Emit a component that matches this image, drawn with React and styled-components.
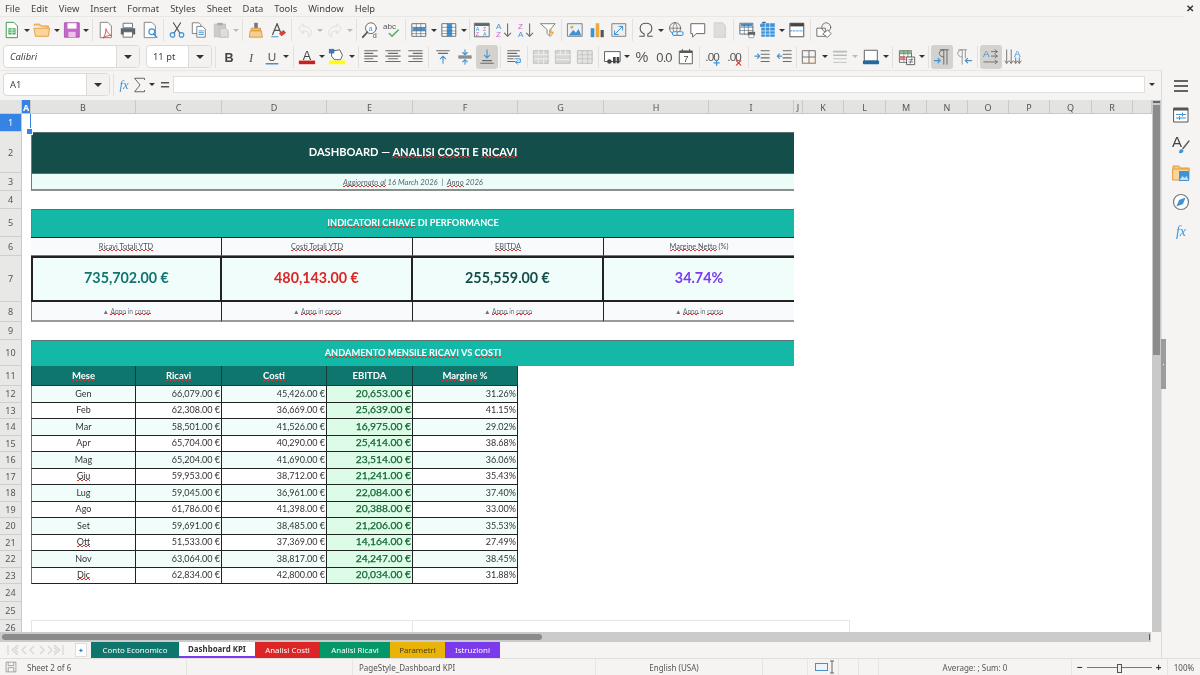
import React from 'react';
import styled, { createGlobalStyle } from 'styled-components';

const Global = createGlobalStyle`
  html, body { margin: 0; padding: 0; background: #f5f4f2; overflow: hidden; }
  * { box-sizing: border-box; }
`;
const uiFont = `"Noto Sans", "Open Sans", sans-serif`;
const cellFont = `Lato, "Liberation Sans", sans-serif`;

const Page = styled.div`
  width: 1200px; height: 675px; display: flex; flex-direction: column;
  background: #f5f4f2; font-family: ${uiFont}; color: #3a3a3a; overflow: hidden; position: relative;
  filter: blur(0.3px);
`;
const MenuBar = styled.div`
  height: 17px; flex: none; display: flex; align-items: center; padding-left: 5px; gap: 11px;
  font-size: 9.4px; color: #444; border-bottom: 1px solid #e8e7e4; margin-right: 16px;
`;
const CloseX = styled.span`
  position: absolute; top: 1px; right: 6px; font-size: 10px; font-weight: 700; color: #333; line-height: 14px;
`;
const Toolbar = styled.div`
  height: ${p => p.$h || 26}px; flex: none; display: flex; align-items: center; padding-left: ${p => p.$pad || 1}px;
`;
const Btn = styled.div`
  width: ${p => p.$w || 22}px; height: 24px; flex: none; display: flex; align-items: center; justify-content: center;
  border-radius: 3px; background: ${p => (p.$on ? '#d4d2cf' : 'transparent')};
  svg { width: 18px; height: 18px; display: block; flex: none; }
`;
const Drop = styled.div`
  width: ${p => p.$w || 8}px; height: 24px; flex: none; display: flex; align-items: center; justify-content: center;
  &::after { content: ''; border-left: 3px solid transparent; border-right: 3px solid transparent;
    border-top: 3px solid ${p => (p.$dim ? '#bbb' : '#333')}; }
`;
const Sep = styled.div`
  width: 1px; height: 22px; flex: none; background: #e2e1de; margin: 0 ${p => p.$r ?? 2}px 0 ${p => p.$l ?? 2}px;
`;
const Combo = styled.div`
  width: ${p => p.$w}px; height: ${p => p.$h || 23}px; flex: none; display: flex; margin-left: ${p => p.$ml || 0}px;
  border: 1px solid #dcdad7; border-radius: 4px; background: #fff; font-size: 10px; color: #444; overflow: hidden;
`;
const ComboText = styled.div`
  flex: 1; padding-left: 6px; display: flex; align-items: center; font-style: ${p => (p.$i ? 'italic' : 'normal')};
  font-family: ${uiFont}; font-size: 9.4px;
`;
const ComboArrow = styled.div`
  width: 23px; flex: none; background: #f3f2f0; border-left: 1px solid #dcdad7; display: flex; align-items: center; justify-content: center;
  &::after { content: ''; border-left: 4px solid transparent; border-right: 4px solid transparent; border-top: 4px solid #333; }
`;

const Body = styled.div`flex: 1; display: flex; min-height: 0;`;
const Work = styled.div`width: 1162px; flex: none; display: flex; flex-direction: column; border-right: 1px solid #dddcd9;`;
const FormulaBar = styled.div`
  height: 30px; flex: none; display: flex; align-items: center; padding: 0 0 2px 3px; border-top: 1px solid #e8e7e4;
`;
const FormulaInput = styled.div`
  width: 972px; height: 17px; flex: none; background: #fff; border: 1px solid #e0dfdc; margin-left: 2px;
`;
const SheetRow = styled.div`flex: 1; display: flex; min-height: 0;`;
const Sheet = styled.div`
  width: 1152px; flex: none; display: grid; overflow: hidden; background: #fff; align-content: start;
  grid-template-columns: 22px 9px 105px 86px 105px 86px 105px 86px 105px 85px 9px 41px 42px 41px 41px 41px 41px 42px 41px 19px;
  grid-template-rows: 14px 18px 41px 18px 18px 28px 19px 46px 20px 18px 26px 20px repeat(12, 16.5px) 18px 18px 15px;
`;
const ColHead = styled.div`
  grid-row: 1; background: ${p => (p.$on ? '#3584e4' : '#e3e3e1')}; color: ${p => (p.$on ? '#fff' : '#555')};
  border-right: 1px solid #c9c9c7; border-bottom: 1px solid #c9c9c7; padding-top: 1px;
  font-size: 9px; display: flex; align-items: center; justify-content: center; font-weight: ${p => (p.$on ? 700 : 400)};
`;
const RowHead = styled.div`
  grid-column: 1; background: ${p => (p.$on ? '#3584e4' : '#e8e8e6')}; color: ${p => (p.$on ? '#fff' : '#555')};
  border-right: 1px solid #c9c9c7; border-bottom: 1px solid #cfcfcd; line-height: 1;
  font-size: 9px; display: flex; align-items: center; justify-content: center;
`;
const Corner = styled.div`grid-row: 1; grid-column: 1; background: #e3e3e1; border-right: 1px solid #c9c9c7; border-bottom: 1px solid #c9c9c7;`;

const Txt = styled.span`white-space: pre;`;
const Merged = styled.div`
  grid-row: ${p => p.$r}; grid-column: 3 / 11; background: ${p => p.$bg}; color: ${p => p.$c || '#fff'};
  font-family: ${cellFont}; font-size: ${p => p.$fs}px; font-weight: ${p => p.$fw || 700}; font-style: ${p => p.$i ? 'italic' : 'normal'};
  display: flex; align-items: center; justify-content: center; padding-bottom: ${p => p.$pb || 0}px;
  border-top: 1px solid #59706e; border-left: 1px solid #6b7f7d; border-bottom: ${p => p.$bb || 'none'};
`;
const KpiLabel = styled.div`
  grid-row: 7; grid-column: ${p => p.$col}; background: #f8fafc; color: #4b5563; font-family: ${cellFont}; font-size: 7.4px;
  display: flex; align-items: center; justify-content: center;
  border-right: ${p => (p.$last ? 'none' : '1px solid #222')}; border-top: 1px solid #222; border-bottom: 1px solid #777;
`;
const KpiValue = styled.div`
  grid-row: 8; grid-column: ${p => p.$col}; background: #f0fdfa; color: ${p => p.$c}; font-family: ${cellFont};
  font-size: 14.3px; font-weight: 700; display: flex; align-items: center; justify-content: center; padding-bottom: 3px;
  border-top: 2px solid #222; border-bottom: 2px solid #222; border-right: ${p => (p.$last ? 'none' : '2px solid #222')};
  border-left: ${p => (p.$first ? '2px solid #222' : 'none')};
`;
const KpiNote = styled.div`
  grid-row: 9; grid-column: ${p => p.$col}; background: #f8fafc; color: #6b7280; font-family: ${cellFont}; font-size: 6.6px;
  display: flex; align-items: center; justify-content: center;
  border-right: ${p => (p.$last ? 'none' : '1px solid #222')}; border-bottom: 2px solid #9a9a9a; border-left: ${p => (p.$first ? '1px solid #777' : 'none')};
`;
const TH = styled.div`
  grid-row: 12; grid-column: ${p => p.$col}; background: #0f766e; color: #fff; font-family: ${cellFont};
  font-size: 9.5px; font-weight: 700; display: flex; align-items: center; justify-content: center;
  border-right: 1px solid #123f3c; border-bottom: 1px solid #123f3c;
  border-left: ${p => (p.$first ? '1px solid #123f3c' : 'none')};
`;
const TD = styled.div`
  grid-row: ${p => p.$r}; grid-column: ${p => p.$col}; background: ${p => p.$bg}; color: ${p => p.$c || '#333'};
  font-family: ${cellFont}; font-size: ${p => p.$fs || 9}px; font-weight: 400; -webkit-text-stroke: ${p => p.$heavy ? '0.25px' : '0'};
  display: flex; align-items: center; justify-content: ${p => (p.$center ? 'center' : 'flex-end')};
  padding: 0 ${p => (p.$center ? 0 : 1)}px ${p => (p.$heavy ? 2 : 1)}px 0;
  border-right: 1px solid #222; border-bottom: 1px solid #222;
  border-left: ${p => (p.$first ? '1px solid #777' : 'none')};
`;
const Spell = styled.span`
  background:
    linear-gradient(90deg, #d8352f 50%, transparent 50%) 0 100% / 4px 1px repeat-x,
    linear-gradient(90deg, #d8352f 50%, transparent 50%) 2px calc(100% - 1px) / 4px 1px repeat-x;
`;
const Stub = styled.div`
  grid-row: 27; grid-column: 3 / ${p => p.$end}; margin-right: ${p => p.$extra || 0}px;
  border-top: 1px solid #e6e6e6; border-left: 1px solid #e6e6e6; border-right: 1px solid #e6e6e6;
`;
const CursorBox = styled.div`
  grid-row: 2; grid-column: 2; border-right: 1px solid #3584e4; position: relative;
  &::after { content: ''; position: absolute; right: -3px; bottom: -3px; width: 5px; height: 5px; background: #3584e4; border: 1px solid #fff; }
`;
const VScroll = styled.div`
  width: 9px; flex: none; background: #c9c9c9; padding: 1px 1px 0 1px; display: flex; flex-direction: column; gap: 2px;
  &::before { content: ''; height: 2px; background: #666; flex: none; }
`;
const VThumb = styled.div`width: 7px; height: 250px; background: #8b8b8b; flex: none;`;
const HScroll = styled.div`height: 10px; flex: none; background: #cbcbcb; margin-right: 10px; display: flex; align-items: center; padding-left: 2px; justify-content: space-between;`;
const HThumb = styled.div`width: 540px; height: 6px; background: #8b8b8b; border-radius: 3px;`;
const HTick = styled.div`width: 1px; height: 6px; background: #555; margin-right: 1px;`;
const TabBar = styled.div`height: 16px; flex: none; display: flex; padding-left: 91px; position: relative;`;
const TabNav = styled.div`
  position: absolute; left: 6px; top: 1px; width: 60px; height: 14px; display: flex; align-items: center;
  svg { width: 60px; height: 14px; }
`;
const AddTab = styled.div`
  position: absolute; left: 75px; top: 1px; width: 12px; height: 14px; background: #fff; border: 1px solid #ddd;
  display: flex; align-items: center; justify-content: center; color: #3d7cc9; font-size: 7px; line-height: 1;
`;
const Tab = styled.div`
  width: ${p => p.$w}px; flex: none; background: ${p => p.$bg}; color: ${p => p.$c || '#fff'}; font-size: 7.9px; font-weight: ${p => (p.$on ? 700 : 400)};
  display: flex; align-items: center; justify-content: center; white-space: pre;
  border-bottom: ${p => (p.$on ? '2px solid #7c3aed' : 'none')};
`;
const StatusBar = styled.div`
  height: 17px; flex: none; display: flex; align-items: center; font-size: 8px; color: #555; border-top: 1px solid #e0dfdc;
`;
const StatusCell = styled.div`
  width: ${p => p.$w}px; flex: none; height: 100%; display: flex; align-items: center; gap: ${p => p.$gap || 0}px;
  justify-content: ${p => p.$j || 'flex-start'}; padding-left: ${p => p.$pl || 0}px; white-space: pre;
  border-right: ${p => (p.$last ? 'none' : '1px solid #e6e5e2')};
`;
const SideBar = styled.div`
  flex: 1; display: flex; flex-direction: column; align-items: center; padding-top: 1px; position: relative;
`;
const SideBtn = styled.div`
  height: 29px; width: 22px; display: flex; align-items: center; justify-content: center;
  svg { width: 20px; height: 20px; }
`;
const Grip = styled.div`
  position: absolute; left: -1px; top: 269px; width: 5px; height: 50px; background: #9c9c9c;
  display: flex; align-items: center; justify-content: center; color: #fff; font-size: 7px; font-weight: 700;
`;
const ZoomTrack = styled.div`width: 65px; height: 1px; background: #777; position: relative; flex: none;
  &::after { content: ''; position: absolute; left: 30px; top: -3px; width: 3px; height: 7px; border: 1px solid #555; background: #eee; }
`;
const ZoomSign = styled.span`color: #333; font-weight: 700; font-size: 10px;`;

/* ---- Icons ---- */
const S = ({ children }) => <svg viewBox="0 0 20 20" fill="none" strokeLinecap="round" strokeLinejoin="round">{children}</svg>;
const Doc = ({ c = '#777', f = '#fff' }) => <path d="M4 1.5h8l4 4v13H4z" fill={f} stroke={c} strokeWidth="1.1" />;
const blue = '#3d93d8', gray = '#6b6b6b', red = '#d8413a', pink = '#c566c9';
const T = ({ x, y, s, c = '#555', a, w, st, f = 'Liberation Sans', ls, children }) => (
  <text x={x} y={y} fontSize={s} fill={c} textAnchor={a} fontWeight={w} fontStyle={st} fontFamily={f} letterSpacing={ls}>{children}</text>
);
const I = {
  newDoc: <S><Doc c="#3f9a52" /><rect x="6" y="8" width="8" height="7" fill="#4caf5e" /><path d="M7 10h6M7 12.5h6M10 8v7" stroke="#fff" strokeWidth=".8" /></S>,
  open: <S><path d="M1.5 5V3.5h6l1.5 2h8V8" fill="#f8c77f" stroke="#e49a3a" /><path d="M1.5 8h17L17 17H3z" fill="#fad49a" stroke="#e49a3a" /></S>,
  save: <S><path d="M2 2h16v16H2z" fill="#c566c9" stroke="#a64aa9" /><rect x="5" y="2.5" width="10" height="6" fill="#fff" /><rect x="6" y="12" width="8" height="6" fill="#eac4ec" /></S>,
  pdf: <S><Doc c="#888" /><path d="M10 9c2 5 4 6 6 7-3 0-7 1-9 3 2-3 3-7 3-10z" stroke={red} strokeWidth="1" /></S>,
  print: <S><rect x="5" y="2.5" width="10" height="5" fill="#fff" stroke="#666" /><path d="M2 8h16v7H2z" fill="#5c6670" /><rect x="5" y="12" width="10" height="6" fill="#fff" stroke="#666" /></S>,
  preview: <S><Doc c="#888" /><circle cx="12" cy="12" r="3.2" stroke={blue} strokeWidth="1.3" fill="#fff" /><path d="M14 14.5l3.5 3.5" stroke={blue} strokeWidth="1.6" /></S>,
  cut: <S><path d="M6 2l7 11M14 2L7 13" stroke="#555" strokeWidth="1.3" /><circle cx="5" cy="15.5" r="2.5" stroke={blue} strokeWidth="1.3" /><circle cx="15" cy="15.5" r="2.5" stroke={blue} strokeWidth="1.3" /></S>,
  copy: <S><path d="M3 2h7l2 2v10H3z" fill="#fff" stroke="#777" /><path d="M8 6h6l3 3v9H8z" fill="#fff" stroke="#777" /><path d="M10 11h5M10 13h5M10 15h5" stroke={blue} /></S>,
  paste: <S><path d="M3 3.5h12v14H3z" fill="#ccc" stroke="#bbb" /><rect x="6" y="2" width="6" height="3" fill="#aaa" /><path d="M9 8h6l3 3v7H9z" fill="#ddd" stroke="#bbb" /></S>,
  clone: <S><path d="M8 2h4v6H8z" fill="#777" /><path d="M5 8h10v3H5z" fill="#f0c070" stroke="#d8973b" /><path d="M4 11h12l1 7H3z" fill="#f6cf8f" stroke="#d8973b" /></S>,
  clear: <S><path d="M9 3L4 15M9 3l4 10M5.8 10.5h6" stroke="#555" strokeWidth="1.4" /><path d="M3 17.5h7" stroke={blue} strokeWidth="1.3" /><path d="M11 14l5-4 3 3-5 4z" fill={red} /></S>,
  undo: <S><path d="M3 8l5-5v3c6 0 9 3 9 7 0 2-1 3-3 5 1-5-1-7-6-7v3z" stroke="#ddd" strokeWidth="1.1" /></S>,
  redo: <S><path d="M17 8l-5-5v3c-6 0-9 3-9 7 0 2 1 3 3 5-1-5 1-7 6-7v3z" stroke="#ddd" strokeWidth="1.1" /></S>,
  find: <S><circle cx="11" cy="8" r="6" stroke="#666" strokeWidth="1.1" fill="#fff" /><path d="M7 12.5L2 18" stroke="#555" strokeWidth="2" /><T x="8.4" y="10.6" s="8" c={blue}>a</T><T x="13" y="18.5" s="8">d</T></S>,
  spell: <S><T x="0" y="9" s="9">abc</T><path d="M7 14l3 3 7-7" stroke="#4caf5e" strokeWidth="1.6" /></S>,
  rows: <S><rect x="2.5" y="3" width="15" height="14" fill="#fff" stroke="#5b6670" /><rect x="3" y="7" width="14" height="4" fill={blue} /><path d="M2.5 7h15M2.5 11h15M2.5 14h15M7 3v14M12 3v14" stroke="#5b6670" strokeWidth=".7" /></S>,
  cols: <S><rect x="2.5" y="3" width="15" height="14" fill="#fff" stroke="#5b6670" /><rect x="8" y="3" width="5" height="14" fill={blue} /><path d="M2.5 7h15M2.5 11h15M2.5 14h15M8 3v14M13 3v14" stroke="#5b6670" strokeWidth=".7" /></S>,
  sort: <S><rect x="2" y="2.5" width="16" height="15" fill="#f7f7f7" stroke="#5b6670" /><rect x="2" y="2.5" width="16" height="3" fill="#5b6670" /><T x="3" y="11" s="6" c={blue}>A</T><T x="3" y="17" s="6" c={pink}>Z</T><T x="11" y="11" s="6" c={pink}>Z</T><T x="11" y="17" s="6" c={blue}>A</T></S>,
  asc: <S><T x="1" y="9" s="9" c={blue}>A</T><T x="1" y="18" s="9" c={pink}>Z</T><path d="M14 3v14M10.5 13.5L14 17l3.5-3.500" stroke={gray} strokeWidth="1.2" /></S>,
  desc: <S><T x="1" y="9" s="9" c={pink}>Z</T><T x="1" y="18" s="9" c={blue}>A</T><path d="M14 3v14M10.5 13.5L14 17l3.5-3.500" stroke={gray} strokeWidth="1.2" /></S>,
  filter: <S><path d="M2 3h16l-6 7v7l-3-3v-4z" fill="#fff" stroke="#777" /><path d="M14 8l-3 5h3l-1 5 4-6h-3z" fill="#f1a93c" /></S>,
  image: <S><rect x="2" y="3" width="16" height="14" fill="#e8f2fb" stroke="#777" /><circle cx="6.5" cy="7" r="1.6" fill="#f1a93c" /><path d="M3 16l5-6 3 3 3-4 3 7z" fill={blue} /></S>,
  chart: <S><rect x="3" y="8" width="4" height="10" fill={blue} /><rect x="8.5" y="2.5" width="4" height="15.5" fill="#f1a93c" /><rect x="14" y="10" width="3.5" height="8" fill="#555" /></S>,
  pivot: <S><rect x="2.5" y="3" width="15" height="14" fill="#eee" stroke="#777" /><path d="M5 15l9-9M14 10V6h-4M5 11v4h4" stroke={blue} strokeWidth="1.1" /></S>,
  omega: <S><path d="M3 17h5v-2.5C5 13 3.5 10.5 3.5 8 3.5 4.5 6.5 2.500 10 2.500s6.500 2 6.500 5.500c0 2.500-1.500 5-4.500 6.500V17h5" stroke="#555" strokeWidth="1.2" /></S>,
  link: <S><circle cx="9" cy="8" r="6.200" stroke="#666" /><path d="M3 8h12M9 2c-3 3-3 9 0 12M9 2c3 3 3 9 0 12" stroke="#666" strokeWidth=".8" /><rect x="6" y="12" width="7" height="4" rx="2" fill="#fff" stroke={blue} strokeWidth="1.2" /><rect x="11" y="12" width="7" height="4" rx="2" fill="#fff" stroke={blue} strokeWidth="1.2" /></S>,
  comment: <S><path d="M2.500 3h15v11H8l-4 4v-4H2.500z" fill="#fff" stroke="#666" strokeWidth="1.100" /></S>,
  note: <S><path d="M4 2h9l3 3v13H4z" fill="#ddd" stroke="#ccc" /></S>,
  printArea: <S><rect x="2.500" y="2.500" width="14" height="12" fill="#fff" stroke="#5b6670" /><rect x="3" y="3" width="13" height="3" fill={blue} /><path d="M2.500 7h14M2.500 10.500h14M7 3v12M11.500 3v12" stroke="#5b6670" strokeWidth=".7" /><rect x="11" y="12" width="8" height="4" fill="#5c6670" /><rect x="12.500" y="15" width="5" height="3.500" fill="#fff" stroke="#666" strokeWidth=".6" /></S>,
  freeze: <S><rect x="2.500" y="2.500" width="15" height="15" fill={blue} /><path d="M2.500 7h15M2.500 11h15M2.500 14.500h15M7 2.500v15M12 2.500v15" stroke="#fff" strokeWidth=".7" /><path d="M4 1.500h3M2 4v2" stroke="#2f6fa8" strokeWidth="1.200" /></S>,
  split: <S><rect x="2.500" y="2.500" width="15" height="15" fill="#fff" stroke="#444" /><rect x="2.500" y="2.500" width="15" height="3.500" fill="#444" /><path d="M2.500 11h15" stroke={blue} strokeDasharray="2 1.500" /></S>,
  shapes: <S><rect x="2.500" y="8" width="9" height="9" fill="#fff" stroke="#666" /><circle cx="12.500" cy="7" r="5" stroke="#666" /><path d="M9 14l5-4 4 4-4 4z" fill="#fff" stroke="#666" /></S>,
  bold: <S><T x="10" y="15.500" a="middle" s="14" w="700" c="#444">B</T></S>,
  italic: <S><T x="10" y="15.500" a="middle" s="14" st="italic" f="Liberation Serif">I</T></S>,
  under: <S><T x="10" y="14" a="middle" s="13">U</T><path d="M3.500 17.500h13" stroke={blue} strokeWidth="1.400" /></S>,
  fontColor: <S><T x="10" y="13" a="middle" s="14" c="#444">A</T><rect x="1" y="14" width="18" height="4" fill="#c9211e" /></S>,
  hilite: <S><path d="M7 3l6-1 3 6-2 5H7L4 9V6z" fill="#fff" stroke="#555" /><rect x="1" y="1" width="6" height="5" fill="#2a6db5" opacity=".9" /><rect x="1" y="14" width="18" height="4" fill="#ffff00" /></S>,
  left: <S><path d="M3 3h14M3 6h9M3 9h14M3 12h9M3 15h14" stroke={gray} strokeWidth="1.200" /></S>,
  center: <S><path d="M2 3h16M5 6h10M2 9h16M5 12h10M2 15h16" stroke={gray} strokeWidth="1.200" /></S>,
  right: <S><path d="M3 3h15M8 6h10M3 9h15M8 12h10M3 15h15" stroke={gray} strokeWidth="1.200" /></S>,
  top: <S><path d="M3 3h14M5 6h10" stroke={gray} strokeWidth="1.200" /><path d="M10 17V9M7 12l3-3 3 3" stroke={blue} strokeWidth="1.200" /></S>,
  middle: <S><path d="M3 9h14M3 11h14" stroke={gray} strokeWidth="1.200" /><path d="M10 2v5M7.500 5L10 7.500 12.500 5M10 18v-5M7.500 15.500L10 13l2.500 2.500" stroke={blue} strokeWidth="1.200" /></S>,
  bottom: <S><path d="M10 2v9M7 8l3 3 3-3" stroke={blue} strokeWidth="1.200" /><path d="M5 14h10M3 17h14" stroke={gray} strokeWidth="1.200" /></S>,
  wrap: <S><path d="M3 3h13M3 6h10M3 9h13M3 12h6M3 15h8" stroke={gray} strokeWidth="1.200" /><path d="M11 12h6v4h-5M14 14l-2 2 2 2" stroke={blue} strokeWidth="1.100" /></S>,
  merge: <S><rect x="2" y="3" width="16" height="14" fill="#d7d7d5" stroke="#bbb" /><path d="M2 7.500h16M2 12h16M7 3v4.500M13 3v4.500M7 12v5M13 12v5" stroke="#f2f2f2" strokeWidth="1" /></S>,
  merge2: <S><rect x="2" y="3" width="16" height="14" fill="#d7d7d5" stroke="#bbb" /><path d="M2 7.500h16M2 13h16M7 3v4.500M13 3v4.500" stroke="#f2f2f2" strokeWidth="1" /></S>,
  merge3: <S><rect x="2" y="3" width="16" height="14" fill="#e4e4e2" stroke="#bbb" /><path d="M2 7.500h16M2 12h16M7 3v14M13 3v14" stroke="#bbb" strokeWidth=".8" /></S>,
  currency: <S><rect x="1" y="4" width="17" height="11" fill="#fff" stroke="#555" /><circle cx="6" cy="15" r="2.500" fill="#444" /><rect x="10" y="10" width="3" height="7" fill="#444" /><rect x="14" y="10" width="3" height="7" fill="#444" /></S>,
  percent: <S><T x="10" y="16" a="middle" s="16">%</T></S>,
  number: <S><T x="10" y="15.500" a="middle" s="14.500" ls="-1">0.0</T></S>,
  date: <S><rect x="3" y="3.500" width="14" height="14" fill="#fff" stroke="#555" /><rect x="3" y="3" width="14" height="2.500" fill="#555" /><path d="M6 1.500v3M14 1.500v3" stroke="#555" /><T x="10" y="15.500" a="middle" s="10" c="#444">7</T></S>,
  addDec: <S><T x="9" y="14" a="middle" s="13" ls="-1">.00</T><path d="M14 13.500v6M11 16.500h6" stroke={blue} strokeWidth="1.300" /></S>,
  delDec: <S><T x="9" y="14" a="middle" s="13" ls="-1">.00</T><path d="M11.500 14l5 5M16.500 14l-5 5" stroke={red} strokeWidth="1.300" /></S>,
  indent: <S><path d="M9 3h9M9 7h9M9 11h9M9 15h9" stroke={gray} strokeWidth="1.200" /><path d="M2 9h5M5 6.500L7.500 9 5 11.500" stroke={blue} strokeWidth="1.200" /></S>,
  outdent: <S><path d="M9 3h9M9 7h9M9 11h9M9 15h9" stroke={gray} strokeWidth="1.200" /><path d="M7.500 9h-5M5 6.500L2.500 9 5 11.500" stroke={blue} strokeWidth="1.200" /></S>,
  borders: <S><rect x="3" y="3" width="14" height="14" stroke="#666" strokeWidth="1" /><path d="M10 3v14M3 10h14" stroke="#666" /><path d="M3 17h14M17 10v7" stroke="#e49a3a" /></S>,
  bstyle: <S><path d="M3 4h14" stroke="#bbb" strokeWidth="2" /><path d="M3 8h14" stroke="#bbb" strokeWidth="1.500" /><path d="M3 12h14" stroke="#bbb" strokeWidth="1" /><path d="M3 16h14" stroke="#bbb" strokeDasharray="2 1" /></S>,
  bcolor: <S><rect x="3" y="2.500" width="14" height="12" fill="#fff" stroke="#555" /><rect x="1" y="14" width="18" height="4" rx="1" fill="#1f6aa5" /></S>,
  cond: <S><rect x="2" y="3" width="13" height="13" fill="#fff" stroke="#666" /><rect x="2" y="3" width="13" height="3.500" fill="#7fc08c" /><rect x="2" y="9" width="6" height="4" fill="#e88" /><path d="M2 6.500h13M2 10h13M2 13h13M6.500 3v13M11 3v13" stroke="#666" strokeWidth=".6" /><rect x="10" y="10" width="8.500" height="8.500" fill="#fff" stroke="#555" /><path d="M12 13h4.500M12 15.500h4.500M15.500 11.500l-2 5.500" stroke="#555" strokeWidth=".8" /></S>,
  ltr: <S><path d="M8 2h9M12 2v16M15.500 2v16M12 2C9 2 7 4 7 6s2 4 5 4" stroke={gray} strokeWidth="1.100" /><path d="M1.500 14h6M5.500 11.500L8 14l-2.500 2.500" stroke={blue} strokeWidth="1.300" /></S>,
  rtl: <S><path d="M4 2h9M8 2v16M11.500 2v9M8 2C5 2 3 4 3 6s2 4 5 4" stroke="#999" strokeWidth="1.100" /><path d="M18.500 14h-7M14 11.500L11.500 14l2.500 2.500" stroke={blue} strokeWidth="1.300" /></S>,
  horiz: <S><T x="1" y="10" s="11" c={blue}>A</T><path d="M10.500 4H17M14.500 2L17 4l-2.500 2M10.500 9H17M14.500 7L17 9l-2.500 2M2 15.500h15M14.500 13.500L17 15.500l-2.500 2" stroke={gray} strokeWidth="1" /></S>,
  vert: <S><T x="11" y="10" s="11" c={blue}>A</T><path d="M3 2v15M1 14.500L3 17l2-2.500M8 2v15M6 14.500L8 17l2-2.500M13 11v6M11 14.500l2 2.500 2-2.500M17 11v6M15 14.500l2 2.500 2-2.500" stroke={gray} strokeWidth="1" /></S>,
  fx: <S><T x="10" y="14.500" a="middle" s="14" st="italic" c={blue} f="Liberation Serif">fx</T></S>,
  sum: <S><path d="M15 4V2.500H4L10 10l-6 7.500h11V16" stroke="#666" strokeWidth="1.100" /></S>,
  eq: <S><path d="M5.500 7.500h9M5.500 12h9" stroke="#555" strokeWidth="1.600" strokeLinecap="butt" /></S>,
  burger: <S><path d="M3 5h14M3 10h14M3 15h14" stroke="#333" strokeWidth="1.700" strokeLinecap="butt" /></S>,
  props: <S><rect x="3" y="3" width="14" height="14" fill="#fff" stroke="#555" /><rect x="3" y="3" width="14" height="2.500" fill="#555" /><path d="M5.500 9.500h9M5.500 13h9" stroke={blue} strokeWidth="1" /><path d="M11.500 8v3M8.500 11.500v3" stroke={blue} strokeWidth="1" /></S>,
  styles: <S><T x="1" y="13" s="15" c="#444">A</T><path d="M8 19c0-3 1.500-4 3-4l1.500 1.500c0 2-2 3-4.500 2.500z" fill={blue} /><path d="M12 14.500L18 7" stroke="#555" strokeWidth="1.300" /></S>,
  gallery: <S><path d="M2 5V3h6l1.500 2H18v3H2z" fill="#f8c77f" stroke="#e49a3a" /><path d="M2 6h16v11H2z" fill="#fad49a" stroke="#e49a3a" /><rect x="8" y="8" width="10" height="10" fill={blue} /><path d="M8.500 17l3-4 2 2 2-2 2 4z" fill="#fff" opacity=".7" /></S>,
  nav: <S><circle cx="10" cy="10" r="7.500" stroke="#777" strokeWidth="1.200" fill="#fff" /><path d="M14.500 5.500L12 12l-6.500 2.500L8 8z" fill={blue} /></S>,
};

const Toolbar1 = () => (
  <Toolbar $h={26}>
    <Btn>{I.newDoc}</Btn><Drop /><Btn>{I.open}</Btn><Drop /><Btn $w={21}>{I.save}</Btn><Drop /><Sep />
    <Btn>{I.pdf}</Btn><Btn>{I.print}</Btn><Btn>{I.preview}</Btn><Sep />
    <Btn>{I.cut}</Btn><Btn>{I.copy}</Btn><Btn>{I.paste}</Btn><Drop $dim /><Sep />
    <Btn>{I.clone}</Btn><Btn>{I.clear}</Btn><Sep />
    <Btn>{I.undo}</Btn><Drop $dim /><Btn>{I.redo}</Btn><Drop $dim /><Sep />
    <Btn>{I.find}</Btn><Btn>{I.spell}</Btn><Sep />
    <Btn>{I.rows}</Btn><Drop /><Btn>{I.cols}</Btn><Drop /><Sep $l={1} $r={1} />
    <Btn>{I.sort}</Btn><Btn>{I.asc}</Btn><Btn>{I.desc}</Btn><Btn>{I.filter}</Btn><Sep />
    <Btn>{I.image}</Btn><Btn>{I.chart}</Btn><Btn>{I.pivot}</Btn><Sep />
    <Btn>{I.omega}</Btn><Drop /><Btn>{I.link}</Btn><Btn>{I.comment}</Btn><Btn>{I.note}</Btn><Sep />
    <Btn>{I.printArea}</Btn><Btn $w={20}>{I.freeze}</Btn><Drop /><Btn>{I.split}</Btn><Sep />
    <Btn>{I.shapes}</Btn>
  </Toolbar>
);
const Toolbar2 = () => (
  <Toolbar $h={27} $pad={3}>
    <Combo $w={137}><ComboText $i>Calibri</ComboText><ComboArrow /></Combo>
    <Combo $w={66} $ml={6}><ComboText>11 pt</ComboText><ComboArrow /></Combo>
    <Sep $l={3} $r={2} />
    <Btn>{I.bold}</Btn><Btn>{I.italic}</Btn><Btn $w={20}>{I.under}</Btn><Drop /><Sep $l={3} $r={2} />
    <Btn>{I.fontColor}</Btn><Drop /><Btn>{I.hilite}</Btn><Drop /><Sep $l={2} $r={1} />
    <Btn>{I.left}</Btn><Btn>{I.center}</Btn><Btn>{I.right}</Btn><Sep $r={3} />
    <Btn>{I.top}</Btn><Btn>{I.middle}</Btn><Btn $on>{I.bottom}</Btn><Sep />
    <Btn>{I.wrap}</Btn><Sep />
    <Btn>{I.merge}</Btn><Btn>{I.merge2}</Btn><Btn>{I.merge3}</Btn><Sep $r={3} />
    <Btn $w={21}>{I.currency}</Btn><Drop /><Btn>{I.percent}</Btn><Btn>{I.number}</Btn><Btn>{I.date}</Btn><Sep />
    <Btn>{I.addDec}</Btn><Btn>{I.delDec}</Btn><Sep />
    <Btn>{I.indent}</Btn><Btn>{I.outdent}</Btn><Sep $l={1} $r={1} />
    <Btn>{I.borders}</Btn><Drop $w={10} /><Btn $w={20}>{I.bstyle}</Btn><Drop $w={10} $dim /><Btn>{I.bcolor}</Btn><Drop /><Sep $r={3} />
    <Btn>{I.cond}</Btn><Drop /><Sep />
    <Btn $on>{I.ltr}</Btn><Btn>{I.rtl}</Btn><Sep />
    <Btn $on>{I.horiz}</Btn><Btn>{I.vert}</Btn>
  </Toolbar>
);

const columns = ['A','B','C','D','E','F','G','H','I','J','K','L','M','N','O','P','Q','R',''];
const rowHeads = Array.from({ length: 26 }, (_, i) => i + 1);
const months = [
  ['Gen','66,079.00','45,426.00','20,653.00','31.26'],['Feb','62,308.00','36,669.00','25,639.00','41.15'],
  ['Mar','58,501.00','41,526.00','16,975.00','29.02'],['Apr','65,704.00','40,290.00','25,414.00','38.68'],
  ['Mag','65,204.00','41,690.00','23,514.00','36.06'],['Giu','59,953.00','38,712.00','21,241.00','35.43'],
  ['Lug','59,045.00','36,961.00','22,084.00','37.40'],['Ago','61,786.00','41,398.00','20,388.00','33.00'],
  ['Set','59,691.00','38,485.00','21,206.00','35.53'],['Ott','51,533.00','37,369.00','14,164.00','27.49'],
  ['Nov','63,064.00','38,817.00','24,247.00','38.45'],['Dic','62,834.00','42,800.00','20,034.00','31.88'],
];
const misspelt = ['Giu','Ott','Dic'];
const kpis = [
  ['3 / 5', <Spell>Ricavi Totali YTD</Spell>, '735,702.00 €', '#0f766e'],
  ['5 / 7', <Spell>Costi Totali YTD</Spell>, '480,143.00 €', '#dc2626'],
  ['7 / 9', <Spell>EBITDA</Spell>, '255,559.00 €', '#134e4a'],
  ['9 / 11', <Txt><Spell>Margine Netto</Spell> (%)</Txt>, '34.74%', '#7c3aed'],
];
const Note = () => <Txt>▲ <Spell>Anno</Spell> in <Spell>corso</Spell></Txt>;

export default function App() {
  return (
    <Page>
      <Global />
      <MenuBar>
        {['File','Edit','View','Insert','Format','Styles','Sheet','Data','Tools','Window','Help'].map(m => <span key={m}>{m}</span>)}
      </MenuBar>
      <CloseX>✕</CloseX>
      <Toolbar1 />
      <Toolbar2 />
      <Body>
        <Work>
          <FormulaBar>
            <Combo $w={107}><ComboText>A1</ComboText><ComboArrow /></Combo>
            <Sep $l={3} $r={0} />
            <Btn $w={20}>{I.fx}</Btn><Btn $w={11}>{I.sum}</Btn><Drop $w={14} /><Btn $w={12}>{I.eq}</Btn>
            <FormulaInput />
            <Drop $w={14} />
          </FormulaBar>
          <SheetRow>
            <Sheet>
              <Corner />
              {columns.map((c, i) => <ColHead key={i} $on={c === 'A'} style={{ gridColumn: i + 2 }}>{c}</ColHead>)}
              {rowHeads.map((r, i) => <RowHead key={r} $on={r === 1} style={{ gridRow: i + 2 }}>{r}</RowHead>)}
              <CursorBox />
              <Merged $r={3} $bg="#134e4a" $fs={11.1} $pb={4}><Txt>DASHBOARD — <Spell>ANALISI</Spell> <Spell>COSTI</Spell> E <Spell>RICAVI</Spell></Txt></Merged>
              <Merged $r={4} $bg="#ecfdf9" $c="#5b6472" $fs={7.7} $fw={400} $i $bb="2px solid #8a8f8e"><Txt><Spell>Aggiornato al</Spell> 16 March 2026  |  <Spell>Anno</Spell> 2026</Txt></Merged>
              <Merged $r={6} $bg="#14b8a6" $fs={9.2} $pb={3}><Txt><Spell>INDICATORI CHIAVE</Spell> DI PERFORMANCE</Txt></Merged>
              {kpis.map(([col, label, value, c], i) => (
                <React.Fragment key={col}>
                  <KpiLabel $col={col} $last={i === 3}>{label}</KpiLabel>
                  <KpiValue $col={col} $c={c} $first={i === 0} $last={i === 3}>{value}</KpiValue>
                  <KpiNote $col={col} $first={i === 0} $last={i === 3}><Note /></KpiNote>
                </React.Fragment>
              ))}
              <Merged $r={11} $bg="#14b8a6" $fs={9.25} $pb={3}><Txt><Spell>ANDAMENTO MENSILE RICAVI</Spell> VS <Spell>COSTI</Spell></Txt></Merged>
              <TH $col={3} $first><Spell>Mese</Spell></TH>
              <TH $col={4}><Spell>Ricavi</Spell></TH>
              <TH $col={5}><Spell>Costi</Spell></TH>
              <TH $col={6}>EBITDA</TH>
              <TH $col={7}><Txt><Spell>Margine</Spell> %</Txt></TH>
              {months.map(([m, a, b, e, p], i) => {
                const r = 13 + i;
                const bg = i % 2 === 0 ? '#f0fdfa' : '#ffffff';
                return (
                  <React.Fragment key={m}>
                    <TD $r={r} $col={3} $bg={bg} $center $first>{misspelt.includes(m) ? <Spell>{m}</Spell> : m}</TD>
                    <TD $r={r} $col={4} $bg={bg}>{a} €</TD>
                    <TD $r={r} $col={5} $bg={bg}>{b} €</TD>
                    <TD $r={r} $col={6} $bg="#dcfce7" $c="#166534" $fs={10.3} $heavy>{e} €</TD>
                    <TD $r={r} $col={7} $bg={bg}>{p}%</TD>
                  </React.Fragment>
                );
              })}
              <Stub $end={7} />
              <Stub $end={13} $extra={-6} />
            </Sheet>
            <VScroll><VThumb /></VScroll>
          </SheetRow>
          <HScroll><HThumb /><HTick /></HScroll>
          <TabBar>
            <TabNav>
              <svg viewBox="0 0 60 14" fill="none" stroke="#d6d5d2" strokeWidth="1.200">
                <path d="M2 2v10M12 2L6 7l6 5M12 4.500L9 7l3 2.500M20 3l-4 4 4 4M28 3l-4 4 4 4M34 3l4 4-4 4M42 3l4 4-4 4M48 2l6 5-6 5M48 4.500L51 7l-3 2.500M57 2v10" />
              </svg>
            </TabNav>
            <AddTab>✦</AddTab>
            <Tab $w={88} $bg="#0f766e">Conto Economico</Tab>
            <Tab $w={76} $bg="#fff" $c="#333" $on>Dashboard KPI</Tab>
            <Tab $w={65} $bg="#dc2626">Analisi Costi</Tab>
            <Tab $w={70} $bg="#059669">Analisi Ricavi</Tab>
            <Tab $w={55} $bg="#eab308" $c="#4a3c0c">Parametri</Tab>
            <Tab $w={55} $bg="#7c3aed">Istruzioni</Tab>
          </TabBar>
        </Work>
        <SideBar>
          <SideBtn>{I.burger}</SideBtn>
          <SideBtn>{I.props}</SideBtn>
          <SideBtn>{I.styles}</SideBtn>
          <SideBtn>{I.gallery}</SideBtn>
          <SideBtn>{I.nav}</SideBtn>
          <SideBtn>{I.fx}</SideBtn>
          <Grip>·</Grip>
        </SideBar>
      </Body>
      <StatusBar>
        <StatusCell $w={187} $pl={4} $gap={9}>
          <svg width="14" height="14" viewBox="0 0 20 20" fill="none"><path d="M3 3h14v14H3z" stroke="#888" /><path d="M6 3v5h8V3M6 17v-6h8v6" stroke="#888" /></svg>
          Sheet 2 of 6
        </StatusCell>
        <StatusCell $w={166} />
        <StatusCell $w={243} $pl={6}>PageStyle_Dashboard KPI</StatusCell>
        <StatusCell $w={167} $j="center" style={{ paddingRight: 10 }}>English (USA)</StatusCell>
        <StatusCell $w={45} />
        <StatusCell $w={31} $pl={7} $gap={3}>
          <svg width="21" height="14" viewBox="0 0 21 14" fill="none"><rect x="0.500" y="3.500" width="12" height="7" fill="#eef4fa" stroke="#4a90c9" /><path d="M15 1h4M17 1v12M15 13h4" stroke="#666" /></svg>
        </StatusCell>
        <StatusCell $w={20} />
        <StatusCell $w={20} />
        <StatusCell $w={193} $j="center">Average: ; Sum: 0</StatusCell>
        <StatusCell $w={96} $pl={5} $gap={4}>
          <ZoomSign>−</ZoomSign><ZoomTrack /><ZoomSign>+</ZoomSign>
        </StatusCell>
        <StatusCell $w={32} $j="center" $last>100%</StatusCell>
      </StatusBar>
    </Page>
  );
}
